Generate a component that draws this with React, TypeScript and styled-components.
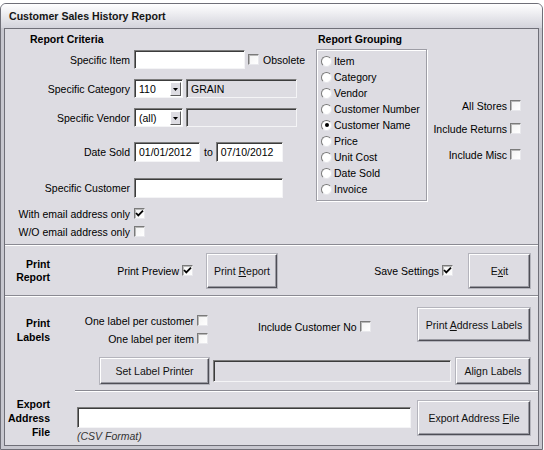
import React from "react";
import styled, { createGlobalStyle } from "styled-components";

const FONT = `"Liberation Sans", Arial, sans-serif`;
const BG = "#dddce2";
const DARK = "#8a8a92";

const GlobalStyle = createGlobalStyle`
  html, body { margin: 0; padding: 0; background: #ffffff; }
  body { font-family: ${FONT}; font-size: 10.5px; color: #000; }
  * { box-sizing: border-box; }
`;

const Window = styled.div`
  margin-top: 3px;
  width: 543px;
  height: 447px;
  border: 1px solid #6f6f78;
  border-radius: 6px 6px 0 0;
  background: #c7c7cf;
  padding: 0 3px 3px 3px;
  display: flex;
  flex-direction: column;
`;

const TitleBar = styled.div`
  height: 24px;
  flex-shrink: 0;
  margin: 0 -3px;
  padding-left: 8px;
  display: flex;
  align-items: center;
  background: linear-gradient(#ffffff, #d3d3db);
  border-radius: 5px 5px 0 0;
  font: bold 10.6px ${FONT};
  color: #151515;
`;

const Body = styled.div`
  flex: 1;
  border: 1px solid #6f6f78;
  background: ${BG};
  display: flex;
  flex-direction: column;
`;

const Divider = styled.div`
  height: 2px;
  flex-shrink: 0;
  border-top: 1px solid ${DARK};
  background: #ffffff;
`;

/* ---------- criteria ---------- */
const Criteria = styled.div`
  height: 215px;
  flex-shrink: 0;
  display: flex;
`;

const LeftCol = styled.div`
  width: 311px;
  padding-top: 4px;
  display: flex;
  flex-direction: column;
`;

const MidCol = styled.div`
  width: 111px;
  padding-top: 4px;
  display: flex;
  flex-direction: column;
`;

const RightCol = styled.div`
  flex: 1;
  padding: 70px 17px 0 0;
  display: flex;
  flex-direction: column;
  align-items: flex-end;
`;

const Heading = styled.div<{ $indent: number }>`
  font-weight: bold;
  line-height: 13px;
  margin-left: ${(p) => p.$indent}px;
`;

const FormRow = styled.div<{ $mt: number; $h: number }>`
  display: grid;
  grid-template-columns: 125px auto;
  column-gap: 4px;
  align-items: center;
  height: ${(p) => p.$h}px;
  margin-top: ${(p) => p.$mt}px;
`;

const Label = styled.span`
  text-align: right;
  white-space: nowrap;
`;

const Fields = styled.div`
  display: flex;
  align-items: center;
`;

const Sunken = styled.div<{ $w: number; $h: number; $ml?: number; $ro?: boolean }>`
  width: ${(p) => p.$w}px;
  height: ${(p) => p.$h}px;
  margin-left: ${(p) => p.$ml ?? 0}px;
  background: ${(p) => (p.$ro ? BG : "#ffffff")};
  border: 1px solid;
  border-color: #7c7c7c #f4f4f6 #f4f4f6 #7c7c7c;
  box-shadow: inset 1px 1px 0 #3c3c3c;
  padding-left: 4px;
  display: flex;
  align-items: center;
  white-space: nowrap;
  position: relative;
  flex-shrink: 0;
`;

const ComboArrow = styled.div`
  position: absolute;
  right: 1px;
  top: 2px;
  bottom: 1px;
  width: 11px;
  background: ${BG};
  border: 1px solid;
  border-color: #ffffff #5c5c5c #5c5c5c #ffffff;
  display: flex;
  align-items: center;
  justify-content: center;
`;

const Text = styled.span<{ $ml?: number }>`
  margin-left: ${(p) => p.$ml ?? 0}px;
  white-space: nowrap;
`;

const BoxOuter = styled.span<{ $ml?: number }>`
  width: 11px;
  height: 11px;
  margin-left: ${(p) => p.$ml ?? 0}px;
  flex-shrink: 0;
  background: linear-gradient(135deg, #f2f2f2, #ffffff);
  border: 1px solid;
  border-color: #7a7a7a #e8e8ec #e8e8ec #7a7a7a;
  box-shadow: inset 1px 1px 0 #b8b8b8;
  display: inline-flex;
  align-items: center;
  justify-content: center;
`;

const CheckField = styled.div<{ $mt?: number; $ml?: number }>`
  display: flex;
  align-items: center;
  gap: 3px;
  height: 13px;
  margin-top: ${(p) => p.$mt ?? 0}px;
  margin-left: ${(p) => p.$ml ?? 0}px;
  white-space: nowrap;
  flex-shrink: 0;
`;

const CheckBox = ({ checked, ml }: { checked?: boolean; ml?: number }) => (
  <BoxOuter $ml={ml}>
    {checked && (
      <svg width="9" height="9" viewBox="0 0 9 9">
        <polyline points="1,4 3.3,6.4 8,1.6" fill="none" stroke="#000" strokeWidth="1.8" />
      </svg>
    )}
  </BoxOuter>
);

const Check = ({
  label,
  checked,
  mt,
  ml,
}: {
  label: string;
  checked?: boolean;
  mt?: number;
  ml?: number;
}) => (
  <CheckField $mt={mt} $ml={ml}>
    <span>{label}</span>
    <CheckBox checked={checked} />
  </CheckField>
);

const GroupBox = styled.div`
  margin-top: 3px;
  height: 152px;
  border: 1px solid #9d9da5;
  box-shadow: inset 1px 1px 0 #ffffff, 1px 1px 0 #ffffff;
  padding: 3px 0 0 4px;
  display: flex;
  flex-direction: column;
`;

const RadioRow = styled.div`
  height: 16px;
  display: flex;
  align-items: center;
  gap: 2px;
  white-space: nowrap;
`;

const RadioCircle = styled.span`
  width: 11px;
  height: 11px;
  border-radius: 50%;
  background: #ffffff;
  border: 1px solid;
  border-color: #7a7a7a #e6e6ea #e6e6ea #7a7a7a;
  display: inline-flex;
  align-items: center;
  justify-content: center;
  flex-shrink: 0;
`;

const RadioDot = styled.span`
  width: 4px;
  height: 4px;
  border-radius: 50%;
  background: #000;
`;

const Radio = ({ label, on }: { label: string; on?: boolean }) => (
  <RadioRow>
    <RadioCircle>{on && <RadioDot />}</RadioCircle>
    <span>{label}</span>
  </RadioRow>
);

/* ---------- lower sections ---------- */
const SideSection = styled.div<{ $h: number; $align: string }>`
  height: ${(p) => p.$h}px;
  flex-shrink: 0;
  display: grid;
  grid-template-columns: 70px 1fr;
  align-items: ${(p) => p.$align};
`;

const SideHeading = styled.div<{ $pt?: number; $lh: number }>`
  font-weight: bold;
  text-align: right;
  padding-right: 25px;
  padding-top: ${(p) => p.$pt ?? 0}px;
  line-height: ${(p) => p.$lh}px;
  align-self: ${(p) => (p.$pt === undefined ? "center" : "start")};
`;

const ContentRow = styled.div`
  display: flex;
  align-items: center;
  padding-right: 8px;
`;

const Slot = styled.div<{ $w: number }>`
  width: ${(p) => p.$w}px;
  display: flex;
  flex-direction: column;
  align-items: flex-end;
  flex-shrink: 0;
`;

const Spacer = styled.div`
  flex: 1;
`;

const Button = styled.button<{ $w: number; $h: number; $ml?: number; $mt?: number }>`
  width: ${(p) => p.$w}px;
  height: ${(p) => p.$h}px;
  margin-left: ${(p) => p.$ml ?? 0}px;
  margin-top: ${(p) => p.$mt ?? 0}px;
  flex-shrink: 0;
  font: 10.5px ${FONT};
  color: #111;
  background: ${BG};
  border: 1px solid;
  border-color: #ffffff #4e4e56 #4e4e56 #ffffff;
  box-shadow: inset -1px -1px 0 #9a9aa2, 0 0 0 1px #b4b4bc;
  padding: 0;
  white-space: nowrap;
`;

const Key = styled.span`
  text-decoration: underline;
`;

const LabelsContent = styled.div`
  display: flex;
  flex-direction: column;
  align-self: stretch;
`;

const TopRow = styled.div`
  padding: 11px 8px 0 0;
  height: 48px;
  display: flex;
  align-items: flex-start;
`;

const BottomRow = styled.div`
  margin-top: 13px;
  height: 26px;
  padding: 0 8px 0 25px;
  display: flex;
  align-items: center;
`;

const ExportContent = styled.div`
  align-self: stretch;
  border-top: 1px solid ${DARK};
  box-shadow: inset 0 1px 0 #ffffff;
  display: flex;
  align-items: flex-start;
  padding: 0 8px 0 2px;
`;

const ExportCol = styled.div`
  margin-top: 16px;
  display: flex;
  flex-direction: column;
`;

const Note = styled.div`
  margin-top: 2px;
  line-height: 12px;
  font-style: italic;
  color: #333;
`;

const Arrow = () => (
  <svg width="5" height="3" viewBox="0 0 5 3">
    <polygon points="0,0 5,0 2.5,3" fill="#000" />
  </svg>
);

export default function App() {
  return (
    <>
      <GlobalStyle />
      <Window>
        <TitleBar>Customer Sales History Report</TitleBar>
        <Body>
          <Criteria>
            <LeftCol>
              <Heading $indent={25}>Report Criteria</Heading>
              <FormRow $mt={4} $h={19}>
                <Label>Specific Item</Label>
                <Fields>
                  <Sunken $w={111} $h={19} />
                  <CheckBox ml={3} />
                  <Text $ml={4}>Obsolete</Text>
                </Fields>
              </FormRow>
              <FormRow $mt={10} $h={19}>
                <Label>Specific Category</Label>
                <Fields>
                  <Sunken $w={49} $h={19}>
                    110
                    <ComboArrow>
                      <Arrow />
                    </ComboArrow>
                  </Sunken>
                  <Sunken $w={111} $h={19} $ml={3} $ro>
                    GRAIN
                  </Sunken>
                </Fields>
              </FormRow>
              <FormRow $mt={10} $h={19}>
                <Label>Specific Vendor</Label>
                <Fields>
                  <Sunken $w={49} $h={19}>
                    (all)
                    <ComboArrow>
                      <Arrow />
                    </ComboArrow>
                  </Sunken>
                  <Sunken $w={111} $h={19} $ml={3} $ro />
                </Fields>
              </FormRow>
              <FormRow $mt={15} $h={20}>
                <Label>Date Sold</Label>
                <Fields>
                  <Sunken $w={66} $h={20}>01/01/2012</Sunken>
                  <Text $ml={4}>to</Text>
                  <Sunken $w={67} $h={20} $ml={3}>
                    07/10/2012
                  </Sunken>
                </Fields>
              </FormRow>
              <FormRow $mt={16} $h={20}>
                <Label>Specific Customer</Label>
                <Fields>
                  <Sunken $w={149} $h={20} />
                </Fields>
              </FormRow>
              <FormRow $mt={9} $h={13}>
                <Label>With email address only</Label>
                <Fields>
                  <CheckBox checked />
                </Fields>
              </FormRow>
              <FormRow $mt={5} $h={13}>
                <Label>W/O email address only</Label>
                <Fields>
                  <CheckBox />
                </Fields>
              </FormRow>
            </LeftCol>
            <MidCol>
              <Heading $indent={2}>Report Grouping</Heading>
              <GroupBox>
                <Radio label="Item" />
                <Radio label="Category" />
                <Radio label="Vendor" />
                <Radio label="Customer Number" />
                <Radio label="Customer Name" on />
                <Radio label="Price" />
                <Radio label="Unit Cost" />
                <Radio label="Date Sold" />
                <Radio label="Invoice" />
              </GroupBox>
            </MidCol>
            <RightCol>
              <Check label="All Stores" />
              <Check label="Include Returns" mt={10} />
              <Check label="Include Misc" mt={13} />
            </RightCol>
          </Criteria>
          <Divider />
          <SideSection $h={49} $align="center">
            <SideHeading $lh={13}>
              Print
              <br />
              Report
            </SideHeading>
            <ContentRow>
              <Slot $w={118}>
                <Check label="Print Preview" checked />
              </Slot>
              <Button $w={70} $h={34} $ml={14}>
                Print <Key>R</Key>eport
              </Button>
              <Spacer />
              <Check label="Save Settings" checked />
              <Button $w={61} $h={34} $ml={16}>
                E<Key>x</Key>it
              </Button>
            </ContentRow>
          </SideSection>
          <Divider />
          <SideSection $h={93} $align="start">
            <SideHeading $pt={19} $lh={14}>
              Print
              <br />
              Labels
            </SideHeading>
            <LabelsContent>
              <TopRow>
                <Slot $w={133}>
                  <Check label="One label per customer" mt={6} />
                  <Check label="One label per item" mt={5} />
                </Slot>
                <Check label="Include Customer No" mt={12} ml={50} />
                <Spacer />
                <Button $w={112} $h={33}>
                  Print <Key>A</Key>ddress Labels
                </Button>
              </TopRow>
              <BottomRow>
                <Button $w={109} $h={26}>
                  Set Label Printer
                </Button>
                <Sunken $w={238} $h={22} $ml={4} $ro />
                <Button $w={74} $h={26} $ml={5}>
                  Align Labels
                </Button>
              </BottomRow>
            </LabelsContent>
          </SideSection>
          <SideSection $h={55} $align="start">
            <SideHeading $pt={7} $lh={14}>
              Export
              <br />
              Address
              <br />
              File
            </SideHeading>
            <ExportContent>
              <ExportCol>
                <Sunken $w={334} $h={21} />
                <Note>(CSV Format)</Note>
              </ExportCol>
              <Spacer />
              <Button $w={112} $h={34} $mt={10}>
                Export Address <Key>F</Key>ile
              </Button>
            </ExportContent>
          </SideSection>
        </Body>
      </Window>
    </>
  );
}
